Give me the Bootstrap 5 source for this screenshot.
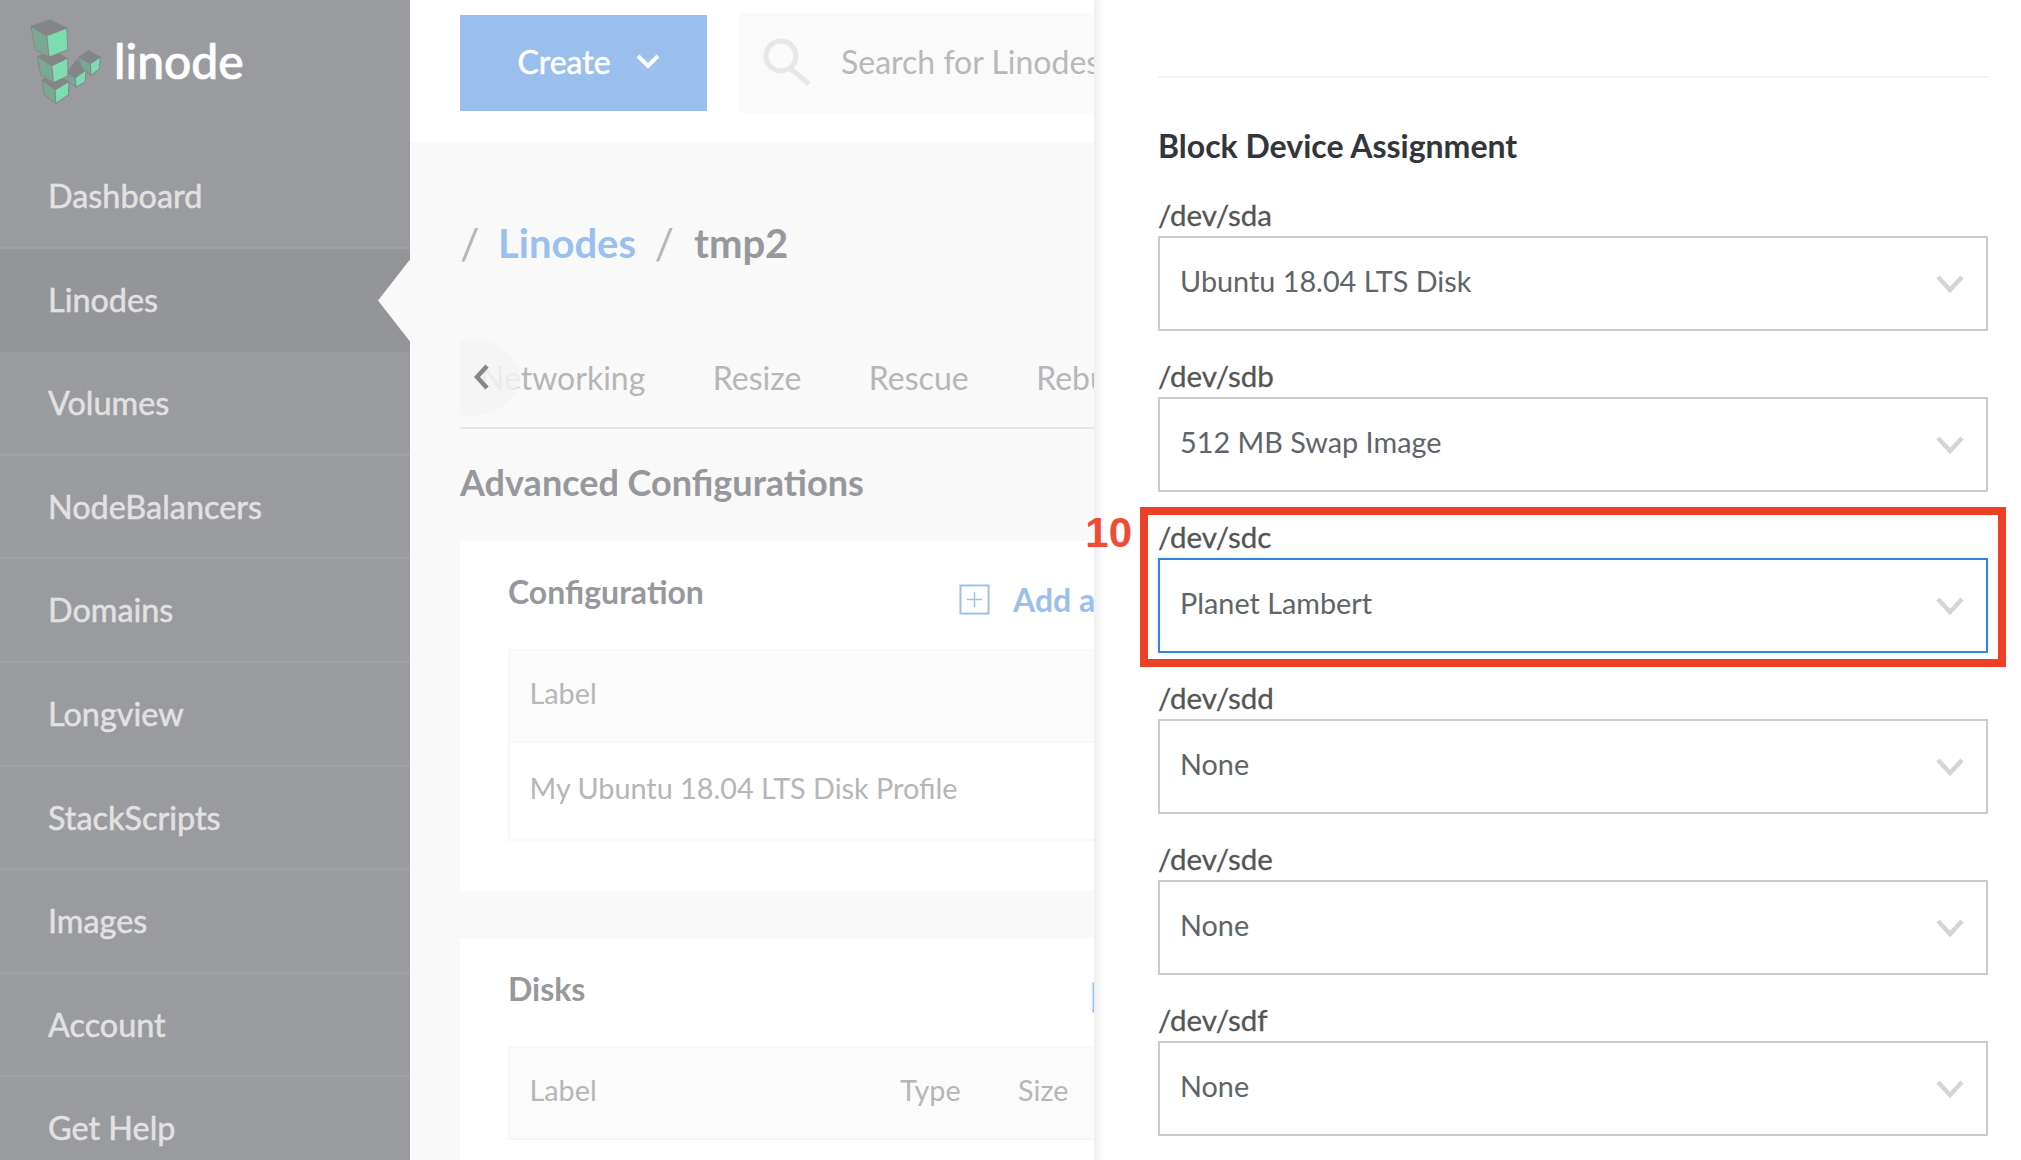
<!doctype html>
<html lang="en">
<head>
<meta charset="utf-8">
<title>Linode</title>
<link href="https://cdn.jsdelivr.net/npm/bootstrap@5.3.0/dist/css/bootstrap.min.css" rel="stylesheet">
<style>
html,body{height:1160px;overflow:hidden}
body{font-family:Lato,"Liberation Sans",sans-serif;background:#fff;color:#606469}
.shell{width:2021px;height:1160px;overflow:hidden;position:relative}
.side{width:410px;flex:none;background:#9a9b9f;height:1160px;overflow:hidden}
.side-logo{height:145px;padding:18px 0 0 30px}
.logo-word{font-size:48px;line-height:46px;color:#fff;font-weight:500;margin:20px 0 0 12px;-webkit-text-stroke:.7px #fff}
.side-link{height:103.6px;line-height:102px;padding-left:48px;font-size:32.4px;color:#e2e2e3;text-decoration:none;display:block;border-bottom:2px solid #a0a1a5;position:relative;-webkit-text-stroke:.5px #e2e2e3}
.side-link.on{background:#949599;border-bottom-color:#949599}
.side-link.on::after{content:"";position:absolute;right:0;top:11px;width:32px;height:82px;background:#f9f9f9;clip-path:polygon(100% 0,0 50%,100% 100%)}
.pane{flex:1 1 auto;min-width:0;background:#f9f9f9;padding:0 0 0 50px;overflow:hidden;position:relative}
.topbar{height:143px;background:#fff;margin-left:-50px;padding:13px 0 0 50px;gap:32px}
.create{width:247px;height:96px;margin-top:2px;background:#9abfec;color:#fff;border:0;border-radius:0;font-size:32px;gap:25px;padding:0 0 3px 10px;-webkit-text-stroke:.5px #fff}
.create:hover{background:#9abfec;color:#fff}
.finder{height:100px;width:900px;background:#fafafa;padding:0 0 3px 24px;gap:30px;font-size:32px;color:#b7b8ba;white-space:nowrap}
.crumbs{margin-top:70px;height:60px;line-height:60px;font-size:40px;font-weight:700;color:#97989c}
.crumb-sep{font-weight:400;color:#b5b6b8;margin:0 18.5px;font-size:43px}
.crumb-sep:first-child{margin-left:0}
.crumb-link + .crumb-sep{margin-right:20px}
.crumb-link{color:#9bc0ec;text-decoration:none}
.tabs-wrap{margin-top:55px;height:101px;border-bottom:2px solid #e6e6e6;position:relative;overflow:hidden}
.tab-line{padding-left:20px;gap:67.5px;font-size:32px;line-height:99px;color:#b5b6b8;white-space:nowrap}
.tab-fade{position:absolute;left:-38px;top:11px;width:98px;height:77px;border-radius:50%;background:rgba(244,244,244,.85);color:#85868a}
.tab-fade svg{position:absolute;left:52px;top:25px}
.sect-h{margin:23px 0 0;height:60px;line-height:60px;font-size:36px;font-weight:700;color:#97989c}
.panel-box{background:#fff;padding:0 48px;margin-top:29px;height:350px}
.panel-box.more{margin-top:47px;height:400px}
.panel-head{height:108px;align-items:flex-start}
.panel-title{font-size:32px;font-weight:700;color:#97989c;line-height:102px;margin:0}
.add-link{position:absolute;left:499px;top:0}
.add-row{gap:23px;color:#9bc0ec;font-size:32px;font-weight:700;line-height:118px;white-space:nowrap}
.add-box{flex:none;margin-top:43px}
.add-cut{position:absolute;left:632px;top:44px}
.plain-tbl{width:1300px;table-layout:fixed;margin:0;border:2px solid #f8f8f8;--bs-table-bg:transparent;font-size:28.8px;color:#b5b6b8}
.plain-tbl th{font-weight:400;background:#fbfbfb;height:92px;padding:0 0 5px 19.5px;vertical-align:middle;border-bottom:2px solid #f6f6f6;color:#b5b6b8}
.plain-tbl td{height:98px;padding:0 0 4px 19.5px;vertical-align:middle;border:0;color:#b5b6b8}
.drawer{position:absolute;right:0;top:0;width:927px;height:1160px;background:#fff;box-shadow:inset 10px 0 8px -6px rgba(0,0,0,.08);padding:0 33px 0 64px}
.drawer-rule{height:78px;border-bottom:2px solid #f4f4f4;margin-right:-2px}
.drawer-title{font-size:32px;font-weight:700;color:#32363c;line-height:50px;margin:43px 0 25px}
.dev-group{position:relative;margin-bottom:26px}
.dev-label{display:block;height:40px;line-height:38px;margin:0;font-size:29.5px;color:#555;-webkit-text-stroke:.3px #555}
.dev-select{height:95px;border:2px solid #ccc;border-radius:0;padding:0 22px 4px 20px;font-size:28.8px;color:#606469;background:#fff}
.dev-select svg{margin-top:4px}
.dev-select.live{border-color:#3683dc;box-shadow:0 0 4px rgba(54,131,220,.2)}
.red-frame{position:absolute;left:-18px;right:-18px;top:-11px;bottom:-14px;border:8px solid #ee4026;pointer-events:none}
.red-num{position:absolute;right:100%;top:-3px;margin-right:16px;font-family:"Liberation Sans",Arial,sans-serif;font-weight:700;font-size:42px;line-height:42px;color:#ee4c35}
</style>
</head>
<body>
<div class="shell d-flex">
  <aside class="side">
    <div class="side-logo d-flex align-items-start">
      <svg width="72" height="87" viewBox="90 55 215 260" xmlns="http://www.w3.org/2000/svg" stroke="#85888a" stroke-width="3" stroke-linejoin="round">
        <g>
          <path fill="#838588" d="M126 240 165 222 206 245 165 270Z"/><path fill="#7aa893" d="M126 240 165 270 167 310 133 285Z"/><path fill="#7fdbb0" d="M165 270 206 245 205 285 167 310Z"/>
          <path fill="#838588" d="M200 218 230 180 258 205 225 234Z"/><path fill="#7aa893" d="M200 220 225 234 228 262 205 245Z"/><path fill="#7fdbb0" d="M225 234 258 210 255 245 228 262Z"/>
          <path fill="#838588" d="M236 172 265 152 300 172 270 192Z"/><path fill="#7aa893" d="M236 172 270 192 272 226 245 205Z"/><path fill="#7fdbb0" d="M270 192 300 172 297 208 272 226Z"/>
          <path fill="#838588" d="M112 170 160 155 203 175 155 198Z"/><path fill="#7aa893" d="M112 170 155 198 160 248 122 225Z"/><path fill="#7fdbb0" d="M155 198 203 175 203 228 160 248Z"/>
          <path fill="#838588" d="M93 80 150 60 200 85 140 108Z"/><path fill="#7aa893" d="M93 80 140 108 147 172 105 150Z"/><path fill="#7fdbb0" d="M140 108 200 85 203 150 147 172Z"/>
        </g>
      </svg>
      <span class="logo-word">linode</span>
    </div>
    <nav>
      <a class="side-link" href="#">Dashboard</a>
      <a class="side-link on" href="#">Linodes</a>
      <a class="side-link" href="#">Volumes</a>
      <a class="side-link" href="#">NodeBalancers</a>
      <a class="side-link" href="#">Domains</a>
      <a class="side-link" href="#">Longview</a>
      <a class="side-link" href="#">StackScripts</a>
      <a class="side-link" href="#">Images</a>
      <a class="side-link" href="#">Account</a>
      <a class="side-link" href="#">Get Help</a>
    </nav>
  </aside>
  <main class="pane">
    <div class="topbar d-flex align-items-start">
      <button class="btn create d-flex align-items-center justify-content-center" type="button">Create
        <svg width="24" height="15" viewBox="0 0 24 15" fill="none" stroke="#fff" stroke-width="4"><path d="M2 2 12 12 22 2"/></svg>
      </button>
      <div class="finder d-flex align-items-center">
        <svg width="48" height="48" viewBox="0 0 48 48" fill="none" stroke="#e7e7e7" stroke-width="5"><circle cx="18" cy="18" r="15"/><path d="M28 31 46 46"/></svg>
        <span>Search for Linodes</span>
      </div>
    </div>
    <div class="crumbs d-flex"><span class="crumb-sep">/</span><a class="crumb-link" href="#">Linodes</a><span class="crumb-sep">/</span><span>tmp2</span></div>
    <div class="tabs-wrap">
      <div class="tab-line d-flex"><span>Networking</span><span>Resize</span><span>Rescue</span><span>Rebuild</span></div>
      <div class="tab-fade"><svg width="16" height="26" viewBox="0 0 16 26" fill="none" stroke="currentColor" stroke-width="4.5"><path d="M13 2 3 13 13 24"/></svg></div>
    </div>
    <h2 class="sect-h">Advanced Configurations</h2>
    <section class="panel-box position-relative">
      <div class="panel-head d-flex">
        <h3 class="panel-title">Configuration</h3>
        <div class="add-link add-row d-flex align-items-start">
          <svg class="add-box" width="31" height="31" viewBox="0 0 32 32" fill="none" stroke="#9bc0ec" stroke-width="2"><rect x="1.5" y="1.5" width="29" height="29"/><path d="M16 8V24M8 16H24" stroke-width="1.5"/></svg>
          <span>Add a</span>
        </div>
      </div>
      <table class="table plain-tbl">
        <thead><tr><th>Label</th></tr></thead>
        <tbody><tr><td>My Ubuntu 18.04 LTS Disk Profile</td></tr></tbody>
      </table>
    </section>
    <section class="panel-box more position-relative">
      <div class="panel-head d-flex">
        <h3 class="panel-title">Disks</h3>
        <svg class="add-cut" width="31" height="31" viewBox="0 0 32 32" fill="none" stroke="#9bc0ec" stroke-width="2"><rect x="1.5" y="1.5" width="29" height="29"/><path d="M16 8V24M8 16H24" stroke-width="1.5"/></svg>
      </div>
      <table class="table plain-tbl">
        <colgroup><col style="width:391px"><col style="width:118px"><col></colgroup>
        <thead><tr><th>Label</th><th class="px-0">Type</th><th class="px-0">Size</th></tr></thead>
      </table>
    </section>
  </main>
  <aside class="drawer">
    <div class="drawer-rule"></div>
    <h2 class="drawer-title">Block Device Assignment</h2>
    <div class="dev-group">
      <label class="dev-label">/dev/sda</label>
      <div class="dev-select d-flex align-items-center justify-content-between"><span>Ubuntu 18.04 LTS Disk</span><svg width="28" height="18" viewBox="0 0 28 18" fill="none" stroke="#d5d5d5" stroke-width="4.5"><path d="M2 2 14 15 26 2"/></svg></div>
    </div>
    <div class="dev-group">
      <label class="dev-label">/dev/sdb</label>
      <div class="dev-select d-flex align-items-center justify-content-between"><span>512 MB Swap Image</span><svg width="28" height="18" viewBox="0 0 28 18" fill="none" stroke="#d5d5d5" stroke-width="4.5"><path d="M2 2 14 15 26 2"/></svg></div>
    </div>
    <div class="dev-group">
      <label class="dev-label">/dev/sdc</label>
      <div class="dev-select live d-flex align-items-center justify-content-between"><span>Planet Lambert</span><svg width="28" height="18" viewBox="0 0 28 18" fill="none" stroke="#d5d5d5" stroke-width="4.5"><path d="M2 2 14 15 26 2"/></svg></div>
      <div class="red-frame"><span class="red-num">10</span></div>
    </div>
    <div class="dev-group">
      <label class="dev-label">/dev/sdd</label>
      <div class="dev-select d-flex align-items-center justify-content-between"><span>None</span><svg width="28" height="18" viewBox="0 0 28 18" fill="none" stroke="#d5d5d5" stroke-width="4.5"><path d="M2 2 14 15 26 2"/></svg></div>
    </div>
    <div class="dev-group">
      <label class="dev-label">/dev/sde</label>
      <div class="dev-select d-flex align-items-center justify-content-between"><span>None</span><svg width="28" height="18" viewBox="0 0 28 18" fill="none" stroke="#d5d5d5" stroke-width="4.5"><path d="M2 2 14 15 26 2"/></svg></div>
    </div>
    <div class="dev-group">
      <label class="dev-label">/dev/sdf</label>
      <div class="dev-select d-flex align-items-center justify-content-between"><span>None</span><svg width="28" height="18" viewBox="0 0 28 18" fill="none" stroke="#d5d5d5" stroke-width="4.5"><path d="M2 2 14 15 26 2"/></svg></div>
    </div>
  </aside>
</div>
<script src="https://cdn.jsdelivr.net/npm/bootstrap@5.3.0/dist/js/bootstrap.bundle.min.js"></script>
</body>
</html>
